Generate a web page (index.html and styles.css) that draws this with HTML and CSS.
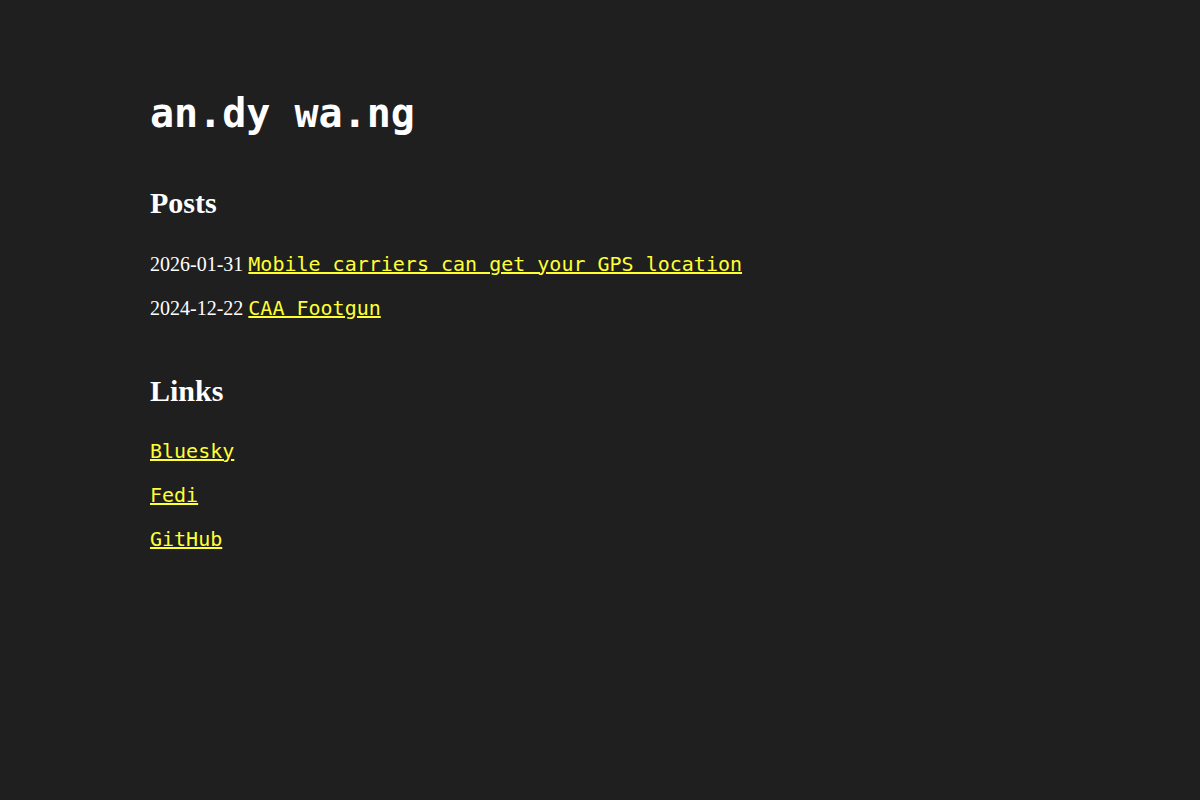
FILE: index.html
```html
<!DOCTYPE html>
<html lang="en">
<head>
<meta charset="utf-8">
<title>an.dy wa.ng</title>
<link rel="stylesheet" href="styles.css">
</head>
<body>
<main class="page">
  <h1 class="site-title">an.dy wa.ng</h1>
  <section class="block">
    <h2 class="block-title">Posts</h2>
    <p class="row"><span class="date">2026-01-31</span> <a class="link" href="#">Mobile carriers can get your GPS location</a></p>
    <p class="row"><span class="date">2024-12-22</span> <a class="link" href="#">CAA Footgun</a></p>
  </section>
  <section class="block">
    <h2 class="block-title">Links</h2>
    <p class="row"><a class="link" href="#">Bluesky</a></p>
    <p class="row"><a class="link" href="#">Fedi</a></p>
    <p class="row"><a class="link" href="#">GitHub</a></p>
  </section>
</main>
</body>
</html>
```

FILE: styles.css
```css
html, body {
  margin: 0;
  background: #1f1f1f;
}
body {
  color: #ffffff;
  font-family: "Liberation Serif", "Times New Roman", serif;
  font-size: 20px;
}
.page {
  max-width: 900px;
  margin: 0 auto;
  padding: 90px 0;
}
.site-title {
  font-family: "DejaVu Sans Mono", monospace;
  font-size: 40px;
  font-weight: bold;
  margin: 0 0 50px;
}
.block {
  margin-bottom: 54px;
}
.block-title {
  font-size: 30px;
  font-weight: bold;
  margin: 0 0 31.5px;
}
.row {
  margin: 0 0 20px;
}
.link {
  font-family: "DejaVu Sans Mono", monospace;
  font-size: 20px;
  color: #ffff33;
  text-decoration-thickness: 2px;
}
```
